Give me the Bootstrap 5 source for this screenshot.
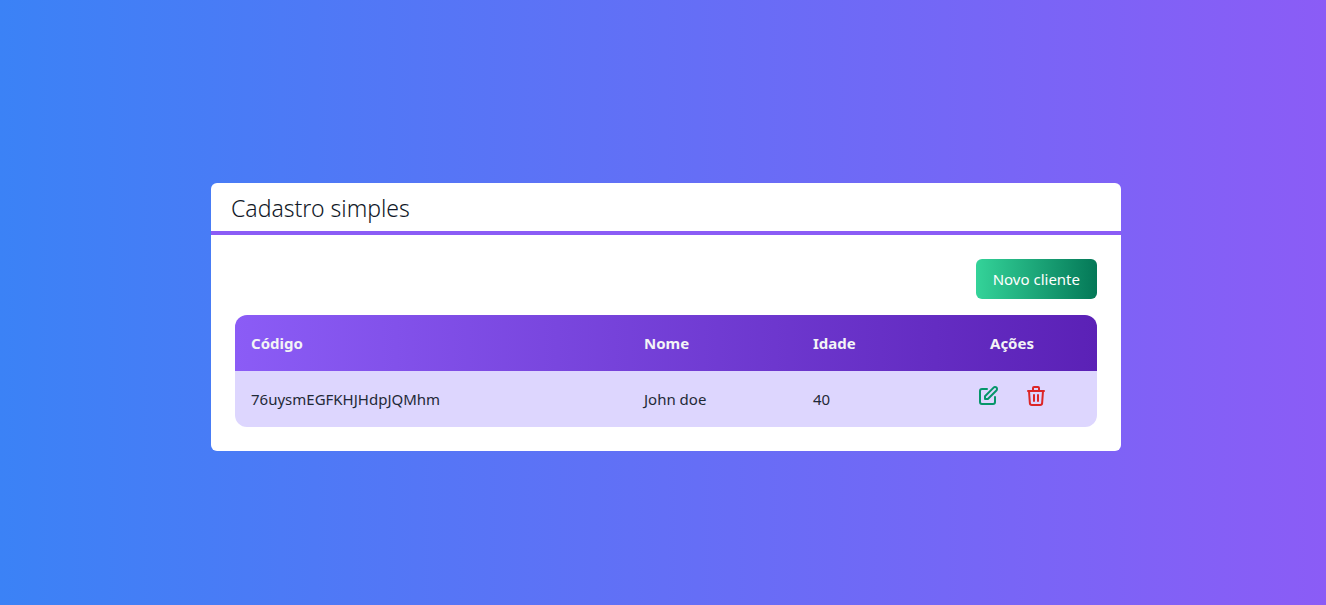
<!DOCTYPE html>
<html lang="pt-BR">
<head>
<meta charset="utf-8">
<meta name="viewport" content="width=device-width, initial-scale=1">
<title>Cadastro simples</title>
<link href="https://cdn.jsdelivr.net/npm/bootstrap@5.3.0/dist/css/bootstrap.min.css" rel="stylesheet">
<style>
body{font-family:"Noto Sans","Open Sans",sans-serif;font-size:15px;line-height:24px;color:#1f2937;background:linear-gradient(to right,#3b82f6,#8b5cf6);padding:28px 0 0 6px}
.panel{max-width:910px;border-radius:6px}
.panel-title{font-size:23px;line-height:32px;font-weight:300;padding:9px 20px 7px;color:#111827}
.panel-rule{height:4px;background:#8b5cf6}
.btn-new,.btn-new:hover{background:linear-gradient(to right,#34d399,#047857);color:#fff}
.btn-new{font-size:15px;line-height:24px;padding:8px 17px;border:0;border-radius:6px}
.clients{border-radius:12px;overflow:hidden;border-collapse:separate;border-spacing:0}
.clients th,.clients td{padding:16px}
.clients thead{background:linear-gradient(to right,#8b5cf6,#5b21b6);color:#f3f4f6}
.clients tbody{background:#ddd6fe}
.col-code{width:393px}
.col-name{width:169px}
.col-actions{width:170px}
.clients .actions{padding:0 0 6px}
.icon-btn{padding:8px;border:0;line-height:0}
.icon-btn svg{width:24px;height:24px;fill:none;stroke:currentColor;stroke-width:2;stroke-linecap:round;stroke-linejoin:round}
.icon-edit,.icon-edit:hover{color:#059669}
.icon-delete,.icon-delete:hover{color:#dc2626}
</style>
</head>
<body class="min-vh-100 d-flex align-items-center justify-content-center">
<main class="panel bg-white w-100">
  <h1 class="panel-title mb-0">Cadastro simples</h1>
  <div class="panel-rule"></div>
  <div class="p-4">
    <div class="d-flex justify-content-end mb-3">
      <button type="button" class="btn btn-new">Novo cliente</button>
    </div>
    <table class="clients w-100">
      <thead>
        <tr><th class="col-code">Código</th><th class="col-name">Nome</th><th>Idade</th><th class="col-actions text-center">Ações</th></tr>
      </thead>
      <tbody>
        <tr>
          <td>76uysmEGFKHJHdpJQMhm</td><td>John doe</td><td>40</td>
          <td class="actions">
            <div class="d-flex justify-content-center gap-2">
              <button type="button" class="btn icon-btn icon-edit" aria-label="Editar">
                <svg viewBox="0 0 24 24" aria-hidden="true"><path d="M11 5H6a2 2 0 00-2 2v11a2 2 0 002 2h11a2 2 0 002-2v-5m-1.414-9.414a2 2 0 112.828 2.828L11.828 15H9v-2.828l8.586-8.586z"/></svg>
              </button>
              <button type="button" class="btn icon-btn icon-delete" aria-label="Excluir">
                <svg viewBox="0 0 24 24" aria-hidden="true"><path d="M19 7l-.867 12.142A2 2 0 0116.138 21H7.862a2 2 0 01-1.995-1.858L5 7m5 4v6m4-6v6m1-10V4a1 1 0 00-1-1h-4a1 1 0 00-1 1v3M4 7h16"/></svg>
              </button>
            </div>
          </td>
        </tr>
      </tbody>
    </table>
  </div>
</main>
<script src="https://cdn.jsdelivr.net/npm/bootstrap@5.3.0/dist/js/bootstrap.bundle.min.js"></script>
</body>
</html>
